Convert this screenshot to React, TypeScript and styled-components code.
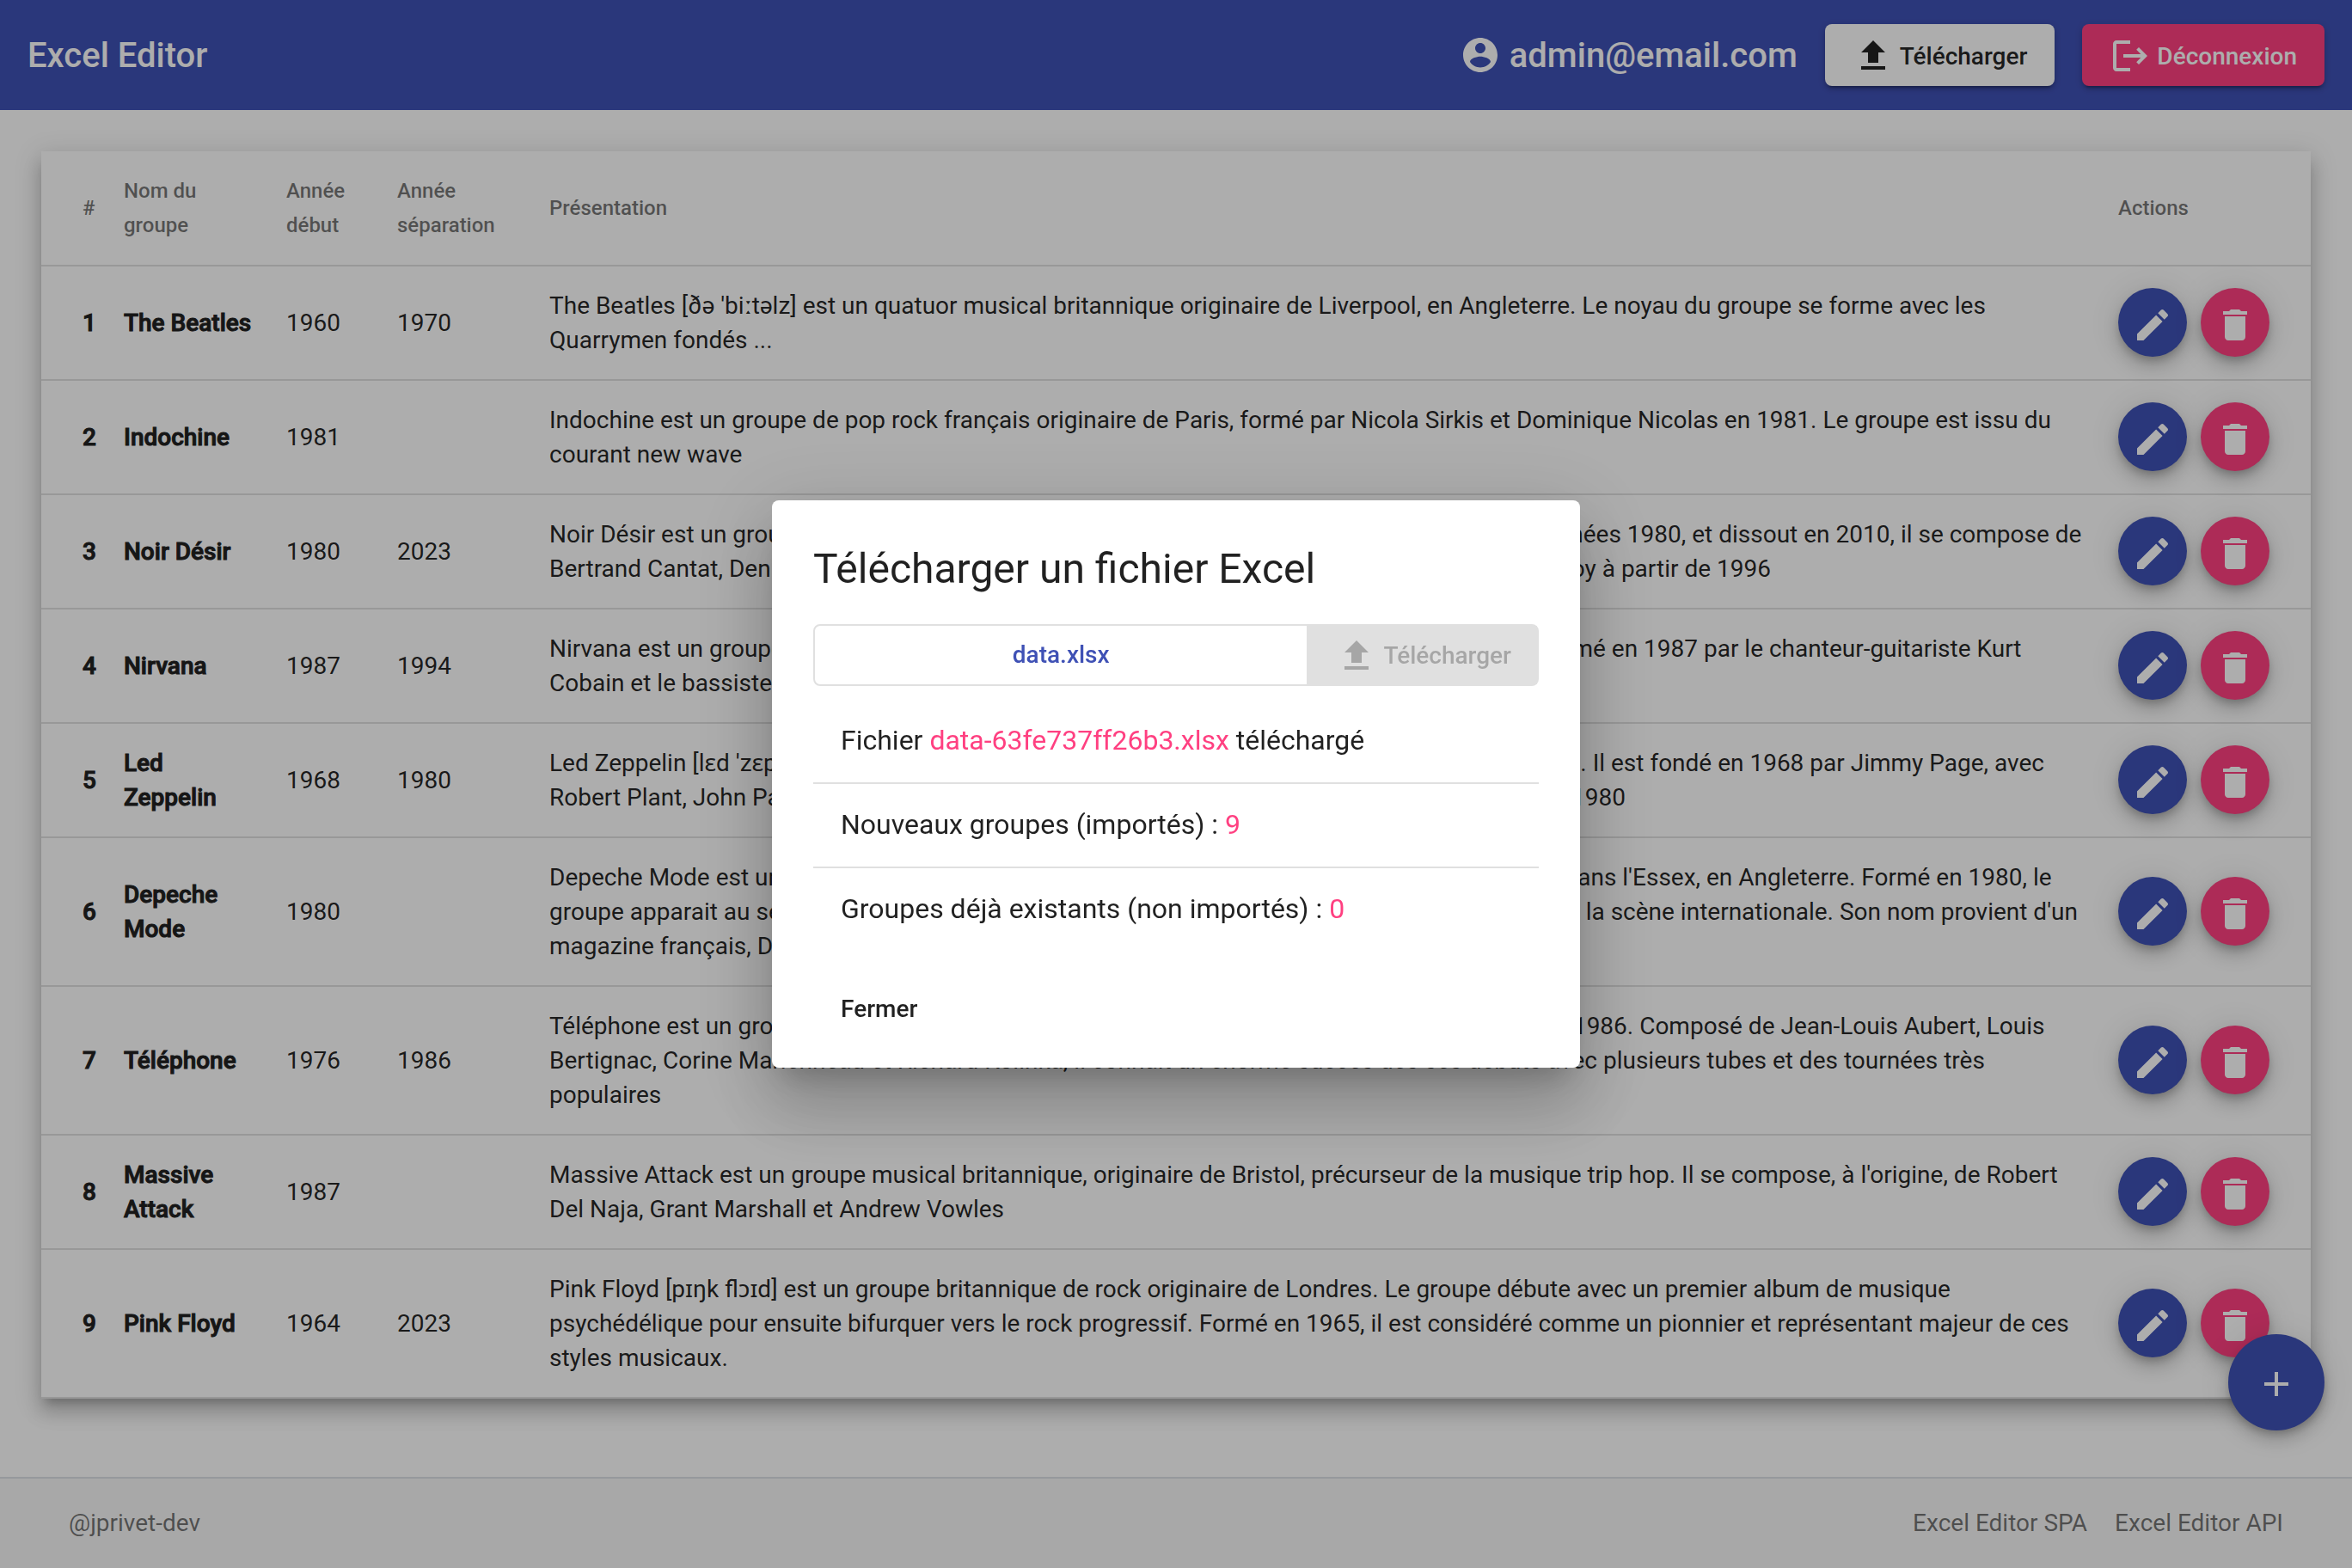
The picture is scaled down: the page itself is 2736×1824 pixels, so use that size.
import React from "react";
import styled, { createGlobalStyle } from "styled-components";

const GlobalStyle = createGlobalStyle`
  *, *::before, *::after { box-sizing: border-box; }
  body {
    margin: 0;
    background: #fff;
    color: rgba(0, 0, 0, 0.87);
    font: 400 28px/40px Roboto, "Noto Sans", sans-serif;
  }
  button, input { font: inherit; }
`;

const Page = styled.div`
  display: flex;
  flex-direction: column;
  min-height: 100vh;
`;

const Toolbar = styled.header`
  display: flex;
  align-items: center;
  gap: 32px;
  height: 128px;
  padding: 0 32px;
  background: #3f51b5;
  color: #fff;
  font-size: 40px;
  font-weight: 500;
  line-height: normal;
`;

const Brand = styled.a`
  margin-right: auto;
  color: inherit;
  text-decoration: none;
`;

const Account = styled.span`
  display: flex;
  align-items: center;
  gap: 10px;
`;

const RaisedButton = styled.button<{ $accent?: boolean }>`
  display: flex;
  align-items: center;
  gap: 7px;
  height: 72px;
  padding: 2px 32px 0;
  border: 0;
  border-radius: 8px;
  background: ${(p) => (p.$accent ? "#ff4081" : "#fff")};
  color: ${(p) => (p.$accent ? "#fff" : "rgba(0, 0, 0, 0.87)")};
  font-size: 28px;
  font-weight: 500;
  cursor: pointer;
  box-shadow: 0 6px 2px -4px rgba(0, 0, 0, 0.2), 0 4px 4px rgba(0, 0, 0, 0.14), 0 2px 10px rgba(0, 0, 0, 0.12);
`;

const Main = styled.main`
  flex: 1;
  padding: 48px 48px 88px;
`;

const Table = styled.table`
  width: 100%;
  border-spacing: 0;
  table-layout: fixed;
  background: #fff;
  box-shadow: 0 10px 10px -6px rgba(0, 0, 0, 0.2), 0 16px 20px 2px rgba(0, 0, 0, 0.14), 0 6px 28px 4px rgba(0, 0, 0, 0.12);
`;

const Col = styled.col<{ $w?: number }>`
  width: ${(p) => (p.$w ? p.$w + "px" : "auto")};
`;

const Th = styled.th`
  padding: 26px 32px 26px 0;
  border-bottom: 2px solid #e0e0e0;
  color: rgba(0, 0, 0, 0.54);
  font-size: 24px;
  font-weight: 500;
  text-align: left;
  &:first-child { padding: 0 0 0 48px; }
  &:last-child { padding-right: 48px; }
`;

const Td = styled.td<{ $bold?: boolean }>`
  padding: 26px 32px 25px 0;
  border-bottom: 2px solid #e0e0e0;
  color: ${(p) => (p.$bold ? "#212121" : "inherit")};
  font-weight: ${(p) => (p.$bold ? 500 : 400)};
  -webkit-text-stroke: ${(p) => (p.$bold ? "1px currentColor" : "0")};
  vertical-align: middle;
  &:first-child { padding: 0 0 0 48px; }
  &:last-child { padding: 0 48px 1px 0; }
`;

const Actions = styled.div`
  display: flex;
  gap: 16px;
`;

const MiniFab = styled.button<{ $accent?: boolean }>`
  display: flex;
  align-items: center;
  justify-content: center;
  width: 80px;
  height: 80px;
  padding: 6px 0 0;
  border: 0;
  border-radius: 50%;
  background: ${(p) => (p.$accent ? "#ff4081" : "#3f51b5")};
  color: #fff;
  cursor: pointer;
  box-shadow: 0 6px 10px -2px rgba(0, 0, 0, 0.2), 0 12px 20px rgba(0, 0, 0, 0.14), 0 2px 36px rgba(0, 0, 0, 0.12);
`;

const AddFab = styled(MiniFab)`
  position: fixed;
  right: 32px;
  bottom: 160px;
  width: 112px;
  height: 112px;
  padding-top: 4px;
`;

const Footer = styled.footer`
  display: flex;
  align-items: center;
  gap: 32px;
  height: 106px;
  padding: 0 80px;
  border-top: 2px solid #dee2e6;
  background: #f8f8f8;
  color: rgba(0, 0, 0, 0.54);
`;

const Author = styled.span`
  margin-right: auto;
`;

const FooterLink = styled.a`
  color: inherit;
  text-decoration: none;
`;

const Backdrop = styled.div`
  position: fixed;
  inset: 0;
  display: flex;
  align-items: center;
  justify-content: center;
  background: rgba(0, 0, 0, 0.32);
`;

const Dialog = styled.section`
  width: 940px;
  padding: 48px 48px 32px;
  border-radius: 8px;
  background: #fff;
  box-shadow: 0 22px 30px -14px rgba(0, 0, 0, 0.2), 0 48px 76px 6px rgba(0, 0, 0, 0.14), 0 18px 92px 16px rgba(0, 0, 0, 0.12);
`;

const Title = styled.h1`
  margin: 0 0 32px;
  font-size: 48px;
  font-weight: 400;
  line-height: 64px;
`;

const UploadGroup = styled.div`
  display: flex;
  height: 72px;
  border: 2px solid #e0e0e0;
  border-radius: 8px;
`;

const FileButton = styled.button`
  flex: 1;
  padding: 0;
  border: 0;
  background: transparent;
  color: #3f51b5;
  font-weight: 500;
  cursor: pointer;
`;

const SendButton = styled.button`
  display: flex;
  align-items: center;
  gap: 7px;
  padding: 2px 30px 0 34px;
  border: 0;
  background: #e0e0e0;
  color: rgba(0, 0, 0, 0.26);
  font-weight: 500;
`;

const Results = styled.ul`
  margin: 16px 0 0;
  padding: 0;
  list-style: none;
  font-size: 32px;
`;

const Result = styled.li`
  height: 96px;
  padding: 0 32px;
  line-height: 94px;
  & + & {
    height: 98px;
    border-top: 2px solid #e0e0e0;
  }
`;

const Value = styled.span`
  color: #ff4081;
`;

const CloseButton = styled.button`
  display: block;
  height: 72px;
  margin-top: 32px;
  padding: 0 32px;
  border: 0;
  background: transparent;
  color: inherit;
  font-weight: 500;
  cursor: pointer;
`;

const Svg = styled.svg`
  flex: none;
  width: 48px;
  height: 48px;
  fill: currentColor;
`;

const paths = {
  account:
    "M12 2C6.48 2 2 6.48 2 12s4.48 10 10 10 10-4.48 10-10S17.52 2 12 2zm0 3c1.66 0 3 1.34 3 3s-1.34 3-3 3-3-1.34-3-3 1.34-3 3-3zm0 14.2c-2.5 0-4.71-1.28-6-3.22.03-1.99 4-3.08 6-3.08 1.99 0 5.97 1.09 6 3.08-1.29 1.94-3.5 3.22-6 3.22z",
  upload: "M9 16h6v-6h4l-7-7-7 7h4zm-4 2h14v2H5z",
  logout:
    "M17 7l-1.41 1.41L18.17 11H8v2h10.17l-2.58 2.58L17 17l5-5zM4 5h8V3H4c-1.1 0-2 .9-2 2v14c0 1.1.9 2 2 2h8v-2H4V5z",
  edit: "M3 17.25V21h3.75L17.81 9.94l-3.75-3.75L3 17.25zM20.71 7.04c.39-.39.39-1.02 0-1.41l-2.34-2.34c-.39-.39-1.02-.39-1.41 0l-1.83 1.83 3.75 3.75 1.83-1.83z",
  trash: "M6 19c0 1.1.9 2 2 2h8c1.1 0 2-.9 2-2V7H6v12zM19 4h-3.5l-1-1h-5l-1 1H5v2h14V4z",
  add: "M19 13h-6v6h-2v-6H5v-2h6V5h2v6h6v2z",
};

function Icon({ name }: { name: keyof typeof paths }) {
  return (
    <Svg viewBox="0 0 24 24" aria-hidden="true">
      <path d={paths[name]} />
    </Svg>
  );
}

type Band = { name: string; start: number; end?: number; text: string };

const bands: Band[] = [
  { name: "The Beatles", start: 1960, end: 1970, text: "The Beatles [ðə 'biːtəlz] est un quatuor musical britannique originaire de Liverpool, en Angleterre. Le noyau du groupe se forme avec les Quarrymen fondés ..." },
  { name: "Indochine", start: 1981, text: "Indochine est un groupe de pop rock français originaire de Paris, formé par Nicola Sirkis et Dominique Nicolas en 1981. Le groupe est issu du courant new wave" },
  { name: "Noir Désir", start: 1980, end: 2023, text: "Noir Désir est un groupe de rock français, originaire de Bordeaux, en Gironde. Formé dans les années 1980, et dissout en 2010, il se compose de Bertrand Cantat, Denis Barthe, Serge Teyssot-Gay et Frédéric Vidalenc remplacé par Jean-Paul Roy à partir de 1996" },
  { name: "Nirvana", start: 1987, end: 1994, text: "Nirvana est un groupe de grunge américain, originaire d'Aberdeen, dans l'État de Washington, formé en 1987 par le chanteur-guitariste Kurt Cobain et le bassiste Krist Novoselic" },
  { name: "Led Zeppelin", start: 1968, end: 1980, text: "Led Zeppelin [lɛd 'zɛpəlɪn], est un groupe de rock britannique, originaire de Londres, en Angleterre. Il est fondé en 1968 par Jimmy Page, avec Robert Plant, John Paul Jones et John Bonham, puis se dissout après la mort de leur batteur en 1980" },
  { name: "Depeche Mode", start: 1980, text: "Depeche Mode est un groupe de new wave et de technopop britannique, originaire de Basildon, dans l'Essex, en Angleterre. Formé en 1980, le groupe apparait au sein de ce courant new wave et rencontre très rapidement le succès sur toute la scène internationale. Son nom provient d'un magazine français, Dépêche mode" },
  { name: "Téléphone", start: 1976, end: 1986, text: "Téléphone est un groupe de punk rock français, originaire de Paris, formé en 1976, et dissout en 1986. Composé de Jean-Louis Aubert, Louis Bertignac, Corine Marienneau et Richard Kolinka, il connait un énorme succès dès ses débuts avec plusieurs tubes et des tournées très populaires" },
  { name: "Massive Attack", start: 1987, text: "Massive Attack est un groupe musical britannique, originaire de Bristol, précurseur de la musique trip hop. Il se compose, à l'origine, de Robert Del Naja, Grant Marshall et Andrew Vowles" },
  { name: "Pink Floyd", start: 1964, end: 2023, text: "Pink Floyd [pɪŋk flɔɪd] est un groupe britannique de rock originaire de Londres. Le groupe débute avec un premier album de musique psychédélique pour ensuite bifurquer vers le rock progressif. Formé en 1965, il est considéré comme un pionnier et représentant majeur de ces styles musicaux." },
];

export default function App() {
  return (
    <>
      <GlobalStyle />
      <Page>
        <Toolbar>
          <Brand href="#">Excel Editor</Brand>
          <Account>
            <Icon name="account" />
            admin@email.com
          </Account>
          <RaisedButton type="button">
            <Icon name="upload" />
            Télécharger
          </RaisedButton>
          <RaisedButton type="button" $accent>
            <Icon name="logout" />
            Déconnexion
          </RaisedButton>
        </Toolbar>
        <Main>
          <Table>
            <colgroup>
              <Col $w={96} />
              <Col $w={189} />
              <Col $w={129} />
              <Col $w={177} />
              <Col />
              <Col $w={224} />
            </colgroup>
            <thead>
              <tr>
                <Th scope="col">#</Th>
                <Th scope="col">Nom du groupe</Th>
                <Th scope="col">Année début</Th>
                <Th scope="col">Année séparation</Th>
                <Th scope="col">Présentation</Th>
                <Th scope="col">Actions</Th>
              </tr>
            </thead>
            <tbody>
              {bands.map((band, i) => (
                <tr key={band.name}>
                  <Td $bold>{i + 1}</Td>
                  <Td $bold>{band.name}</Td>
                  <Td>{band.start}</Td>
                  <Td>{band.end}</Td>
                  <Td>{band.text}</Td>
                  <Td>
                    <Actions>
                      <MiniFab type="button" aria-label={"Modifier " + band.name}>
                        <Icon name="edit" />
                      </MiniFab>
                      <MiniFab type="button" $accent aria-label={"Supprimer " + band.name}>
                        <Icon name="trash" />
                      </MiniFab>
                    </Actions>
                  </Td>
                </tr>
              ))}
            </tbody>
          </Table>
        </Main>
        <Footer>
          <Author>@jprivet-dev</Author>
          <FooterLink href="#">Excel Editor SPA</FooterLink>
          <FooterLink href="#">Excel Editor API</FooterLink>
        </Footer>
      </Page>
      <AddFab type="button" aria-label="Ajouter un groupe">
        <Icon name="add" />
      </AddFab>
      <Backdrop>
        <Dialog role="dialog" aria-modal="true" aria-labelledby="dialog-title">
          <Title id="dialog-title">Télécharger un fichier Excel</Title>
          <UploadGroup>
            <FileButton type="button">data.xlsx</FileButton>
            <SendButton type="button" disabled>
              <Icon name="upload" />
              Télécharger
            </SendButton>
          </UploadGroup>
          <Results>
            <Result>
              Fichier <Value>data-63fe737ff26b3.xlsx</Value> téléchargé
            </Result>
            <Result>
              Nouveaux groupes (importés) : <Value>9</Value>
            </Result>
            <Result>
              Groupes déjà existants (non importés) : <Value>0</Value>
            </Result>
          </Results>
          <CloseButton type="button">Fermer</CloseButton>
        </Dialog>
      </Backdrop>
    </>
  );
}
